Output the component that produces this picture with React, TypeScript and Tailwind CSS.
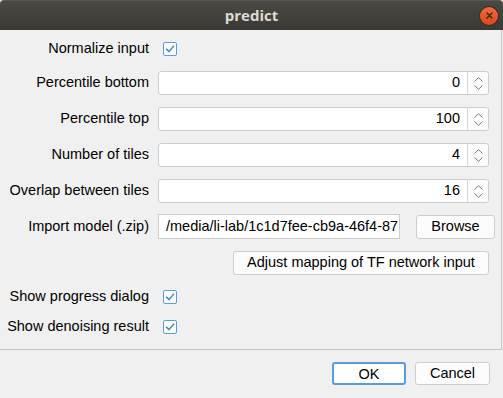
import React from 'react'

function Check() {
  return (
    <span className="ml-[5px] flex h-[14px] w-[14px] items-center justify-center rounded-[2px] border border-[#5b9be0] bg-white">
      <svg width="12" height="12" viewBox="0 0 12 12" fill="none">
        <path d="M2.5 6.2 L5 8.6 L9.6 3.2" stroke="#4a8fdc" strokeWidth="1.6" strokeLinecap="round" strokeLinejoin="round" />
      </svg>
    </span>
  )
}

function Spin({ value }: Readonly<{ value: string }>) {
  return (
    <div className="flex h-[24px] w-[331px] rounded-[3px] border border-[#cdcdcd] bg-white">
      <div className="flex flex-1 items-center justify-end pr-[7px] text-[14.5px] text-black">{value}</div>
      <div className="flex w-[21px] flex-col items-center justify-center gap-[3px] rounded-r-[3px] border-l border-[#d6d6d6] bg-[#fbfbfb]">
        <svg width="9" height="5" viewBox="0 0 9 5" fill="none">
          <path d="M0.5 4.5 L4.5 0.7 L8.5 4.5" stroke="#7a7a7a" strokeWidth="1" />
        </svg>
        <svg width="9" height="5" viewBox="0 0 9 5" fill="none">
          <path d="M0.5 0.5 L4.5 4.3 L8.5 0.5" stroke="#7a7a7a" strokeWidth="1" />
        </svg>
      </div>
    </div>
  )
}

function Row({ label, mt, children }: Readonly<{ label?: string; mt: string; children: React.ReactNode }>) {
  return (
    <div className={`flex h-[24px] items-center ${mt}`}>
      <div className="w-[149px] whitespace-nowrap text-right text-[14.5px] text-black">{label}</div>
      <div className="ml-[9px] flex items-center">{children}</div>
    </div>
  )
}

export default function App() {
  return (
    <div
      className="flex h-[398px] w-[503px] flex-col overflow-hidden bg-[#f0f0f0]"
      style={{ fontFamily: '"Liberation Sans", Arial, sans-serif' }}
    >
      {/* title bar */}
      <div className="grid h-[30px] grid-cols-[1fr_auto_1fr] items-center rounded-t-[4px] border-t border-[#5a5853] bg-gradient-to-b from-[#4b4944] to-[#3a3935]">
        <div />
        <div
          className="text-[15px] font-bold text-[#dfdbd2]"
          style={{ fontFamily: '"Open Sans", "Noto Sans", sans-serif' }}
        >
          predict
        </div>
        <div className="flex justify-end pr-[5px]">
          <span className="flex h-[18px] w-[18px] items-center justify-center rounded-full bg-gradient-to-b from-[#f06a3b] to-[#dd4814] shadow-[0_0_0_1px_#2e2d2a]">
            <svg width="7" height="7" viewBox="0 0 7 7">
              <path d="M1 1 L6 6 M6 1 L1 6" stroke="#3b2a20" strokeWidth="1.5" strokeLinecap="round" />
            </svg>
          </span>
        </div>
      </div>

      {/* form */}
      <div className="h-[320px] w-[502px] border-b border-r border-[#c4c4c4] pt-[7px]">
        <Row label="Normalize input" mt="mt-0">
          <Check />
        </Row>
        <Row label="Percentile bottom" mt="mt-[10px]">
          <Spin value="0" />
        </Row>
        <Row label="Percentile top" mt="mt-[12px]">
          <Spin value="100" />
        </Row>
        <Row label="Number of tiles" mt="mt-[12px]">
          <Spin value="4" />
        </Row>
        <Row label="Overlap between tiles" mt="mt-[12px]">
          <Spin value="16" />
        </Row>
        <div className="mt-[11px] flex h-[25px] items-center">
          <div className="w-[149px] whitespace-nowrap text-right text-[14.5px] text-black">Import model (.zip)</div>
          <div className="ml-[9px] flex h-[25px] w-[242px] items-center overflow-hidden border border-[#cdcdcd] bg-white pl-[7px]">
            <span className="whitespace-nowrap text-[14.5px] text-black">/media/li-lab/1c1d7fee-cb9a-46f4-87</span>
          </div>
          <button className="ml-[16px] h-[24px] w-[79px] rounded-[3px] border border-[#cdcdcd] bg-[#fcfcfc] text-[14.5px] text-black">
            Browse
          </button>
        </div>
        <div className="mt-[12px] flex h-[24px] items-center">
          <button className="ml-[233px] h-[24px] w-[256px] rounded-[3px] border border-[#cdcdcd] bg-[#fcfcfc] text-[14.5px] text-black">
            Adjust mapping of TF network input
          </button>
        </div>
        <Row label="Show progress dialog" mt="mt-[10px]">
          <Check />
        </Row>
        <Row label="Show denoising result" mt="mt-[6px]">
          <Check />
        </Row>
      </div>

      {/* buttons */}
      <div className="flex justify-end gap-[9px] pr-[13px] pt-[12px]">
        <button className="h-[23px] w-[74px] rounded-[3px] border-2 border-[#5c9be0] bg-white text-[14.5px] text-black">
          OK
        </button>
        <button className="h-[23px] w-[75px] rounded-[3px] border border-[#cdcdcd] bg-[#fcfcfc] text-[14.5px] text-black">
          Cancel
        </button>
      </div>
    </div>
  )
}
